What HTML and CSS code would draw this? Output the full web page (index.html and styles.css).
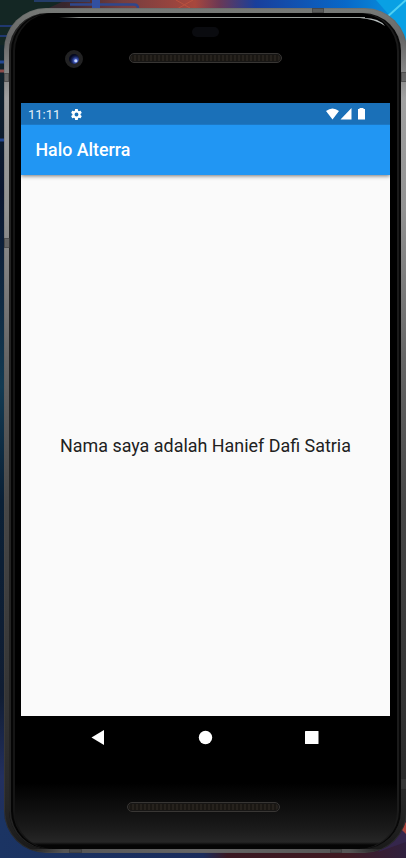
FILE: index.html
```html
<!DOCTYPE html>
<html lang="id">
<head>
<meta charset="utf-8">
<title>Halo Alterra</title>
<link rel="stylesheet" href="styles.css">
</head>
<body>
<div class="desktop">
  <svg class="wallpaper" viewBox="0 0 406 858" aria-hidden="true">
    <defs>
      <linearGradient id="sky" x1="0" x2="1"><stop offset="0" stop-color="#1b2b2c"/><stop offset=".16" stop-color="#38262c"/><stop offset=".3" stop-color="#743e40"/><stop offset=".48" stop-color="#a8473d"/><stop offset=".54" stop-color="#6b3855"/><stop offset=".63" stop-color="#183f9c"/><stop offset=".85" stop-color="#0868c8"/><stop offset="1" stop-color="#0899e2"/></linearGradient>
      <linearGradient id="edge" x2="0" y2="1"><stop offset="0" stop-color="#10242a"/><stop offset=".18" stop-color="#0b1630"/><stop offset=".42" stop-color="#123a52"/><stop offset=".56" stop-color="#0a2036"/><stop offset=".8" stop-color="#101d33"/><stop offset=".9" stop-color="#23305f"/><stop offset="1" stop-color="#1a315f"/></linearGradient>
      <linearGradient id="floor" x1="0" x2="1"><stop offset="0" stop-color="#1b3463"/><stop offset=".5" stop-color="#1a2c5c"/><stop offset=".56" stop-color="#3a1822"/><stop offset=".85" stop-color="#401a22"/><stop offset="1" stop-color="#30203e"/></linearGradient>
    </defs>
    <rect width="406" height="60" fill="url(#sky)"/>
    <path d="M0 0h66L40 12 0 50z" fill="#142724"/>
    <path d="M70 4.500h64q4 0 4 4" fill="none" stroke="#2f478c" stroke-width="2.500"/>
    <path d="M96 0v9" stroke="#3250a0" stroke-width="8"/>
    <path d="M34 1h56" stroke="#28457f" stroke-width="1.500"/>
    <path d="M0 26h14M0 36h9" stroke="#20386f" stroke-width="2"/>
    <path d="M176 0l14 8M193 0l-16 9" stroke="#b9523f"/>
    <path d="M376 0h30v45L390 16z" fill="#09a0e4"/><path d="M386 18l20-18" stroke="#4fd0f2" stroke-width="2"/>
    <rect y="45" width="20" height="813" fill="url(#edge)"/>
    <path d="M0 71h6" stroke="#8b4b4a" stroke-width="3"/>
    <path d="M0 62h6M0 140h6" stroke="#234791" stroke-width="3"/>
    <rect y="810" width="406" height="48" fill="url(#floor)"/>
    <path d="M406 822v20l-28 10z" fill="#35264c"/><path d="M400 828l6-6v12z" fill="#a8453d"/>
  </svg>
  <div class="phone">
    <i class="seam seam-left"></i><i class="seam seam-left-low"></i><i class="seam seam-right"></i><i class="seam seam-right-low"></i>
    <i class="seam seam-top"></i><i class="seam seam-bottom-a"></i><i class="seam seam-bottom-b"></i>
    <div class="glass">
      <i class="shine"></i>
      <svg class="glint" viewBox="0 0 30 14" aria-hidden="true"><path d="M0 2Q19 1 25 10Q15 3 0 2" fill="#b5bbbb"/></svg>
      <div class="forehead">
        <i class="camera"></i>
        <div class="ear"><i class="sensor"></i><i class="speaker"></i></div>
      </div>
      <main class="screen">
        <div class="status">
          <span>11:11</span>
          <svg class="gear" viewBox="0 0 24 24"><path fill="#fff" fill-rule="evenodd" d="M19.4 13c.1-.6.1-1.400 0-2l2.100-1.600c.2-.2.300-.4.100-.7l-2-3.400c-.1-.2-.4-.3-.6-.2l-2.500 1a8 8 0 0 0-1.700-1l-.4-2.600c0-.3-.2-.5-.5-.5h-4c-.3 0-.5.2-.5.500L9 5.100a8 8 0 0 0-1.700 1l-2.500-1c-.2-.1-.5 0-.6.2l-2 3.400c-.1.300 0 .5.1.7L4.500 11a8 8 0 0 0 0 2l-2.200 1.600c-.2.2-.2.400-.1.700l2 3.400c.1.200.4.300.6.200l2.500-1c.5.400 1.100.7 1.700 1l.4 2.600c0 .3.200.5.500.5h4c.3 0 .5-.2.500-.5l.4-2.600a8 8 0 0 0 1.700-1l2.500 1c.2.100.5 0 .6-.2l2-3.400c.2-.3.100-.5-.1-.7zM12 15.600a3.600 3.600 0 1 1 0-7.200 3.600 3.600 0 0 1 0 7.200z"/></svg>
          <svg class="signals" viewBox="0 0 40 12"><path fill="#fff" d="M0 3Q6.500-2 13 3L6.500 11.500zM25.500 0v11.500H14.500zM33.500 0h4v1H39v10.500h-7V1h1.500z"/></svg>
        </div>
        <header class="appbar">Halo Alterra</header>
        <section class="content"><p>Nama saya adalah Hanief Dafi Satria</p></section>
      </main>
      <nav class="nav">
        <svg viewBox="0 0 16 16"><path d="M14 1v15L1.500 8.500z"/></svg>
        <svg viewBox="0 0 16 16"><circle cx="8.500" cy="8.500" r="6.700"/></svg>
        <svg viewBox="0 0 16 16"><rect x="2" y="2" width="13.500" height="13" rx=".5"/></svg>
      </nav>
      <div class="chin"><i class="speaker"></i></div>
    </div>
  </div>
</div>
</body>
</html>
```
FILE: styles.css
```css
* { box-sizing: border-box; }
body { margin: 0; font-family: Roboto, sans-serif; background: #10182b; }
i { display: block; }
.desktop { position: relative; width: 406px; height: 858px; overflow: hidden; padding: 8px 0 0 4px; }
.wallpaper { position: absolute; inset: 0; width: 406px; height: 858px; }
.phone {
  position: relative; width: 403px; height: 845px; padding: 5px 6px 4px 5px;
  border-radius: 42px;
  background:
    linear-gradient(90deg, transparent 22px, #555 60px, #666 200px, #555 345px, transparent 382px) 0 100% / 100% 4px no-repeat,
    linear-gradient(#777a77 0, #666 30px, #a0a0a0 90px, #929292 200px, #666 350px, #464646 500px, #333 700px, #272727 790px, #191919 845px);
  box-shadow: inset 0 0 0 1px #5554;
}
.glass {
  position: relative; height: 836px; border-radius: 38px; overflow: hidden; padding: 0 12px;
  background: linear-gradient(transparent 770px, #1a1a1a 815px, #262626 829px, #050505 832px), #000;
  box-shadow: inset 2px 0 #232323, inset 4px 0 #050505, inset 6px 0 #151515, inset -2px 0 #080808, inset -4px 0 #1b1b1b;
}
.shine { position: absolute; left: 50px; top: 4px; width: 306px; height: 1px; background: linear-gradient(90deg, transparent, #929794 20px, #9ba09d); }
.glint { position: absolute; left: 351px; top: 3px; width: 30px; height: 14px; }
.seam { position: absolute; z-index: 1; background: #4448; border: 1px solid #3336; }
.seam-left { left: 0; top: 65px; width: 5px; height: 9px; }
.seam-left-low { left: 0; top: 230px; width: 6px; height: 10px; }
.seam-right { right: 0; top: 64px; width: 6px; height: 10px; }
.seam-right-low { right: 0; top: 771px; width: 6px; height: 10px; }
.seam-top { left: 308px; top: 0; width: 12px; height: 5px; }
.seam-bottom-a { left: 65px; bottom: 0; width: 13px; height: 4px; }
.seam-bottom-b { left: 326px; bottom: 0; width: 12px; height: 4px; }
.forehead { display: flex; height: 90px; padding-left: 44px; }
.camera { width: 18px; height: 18px; margin-top: 37px; border-radius: 50%; border: 4px solid #222223; background: radial-gradient(circle at 68% 68%, #c5d6ff 0 1px, #4158ba 2px, #17245b 4px, #050920 6px); }
.ear { margin-left: 46px; width: 153px; }
.sensor { width: 27px; height: 10px; margin: 14px 0 16px 63px; border-radius: 5px; background: #0a0b0f; }
.speaker { width: 153px; height: 10px; border: 1px solid #383634; border-radius: 5px; background: repeating-linear-gradient(90deg, #26221d 0 2px, #1a1713 2px 4px); box-shadow: inset 0 0 0 1px #171615; }
.screen { width: 369px; height: 613px; background: #fafafa; display: flex; flex-direction: column; }
.status { height: 22px; flex: none; display: flex; align-items: center; padding: 1px 24px 0 7px; color: #e4f0fa; background: #1a70b8; border-bottom: 1px solid #1c78c5; font-size: 13px; }
.gear { width: 13px; height: 13px; margin-left: 9.5px; }
.signals { width: 40px; height: 12px; margin-left: auto; }
.appbar { height: 50px; flex: none; padding-left: 14.5px; background: #2196f3; color: #fff; font-size: 17.8px; font-weight: 500; line-height: 50px; box-shadow: 0 1px 4px #0008; clip-path: inset(0 0 -6px 0); }
.content { flex: 1; display: grid; place-items: center; color: #212121; font-size: 17.92px; }
.content p { margin: 0; white-space: nowrap; }
.nav { height: 42px; display: flex; justify-content: space-between; align-items: center; padding: 0 71px 0 69px; width: 369px; }
.nav svg { width: 16px; height: 16px; fill: #fff; }
.chin { padding: 44px 0 0 106px; }
```
